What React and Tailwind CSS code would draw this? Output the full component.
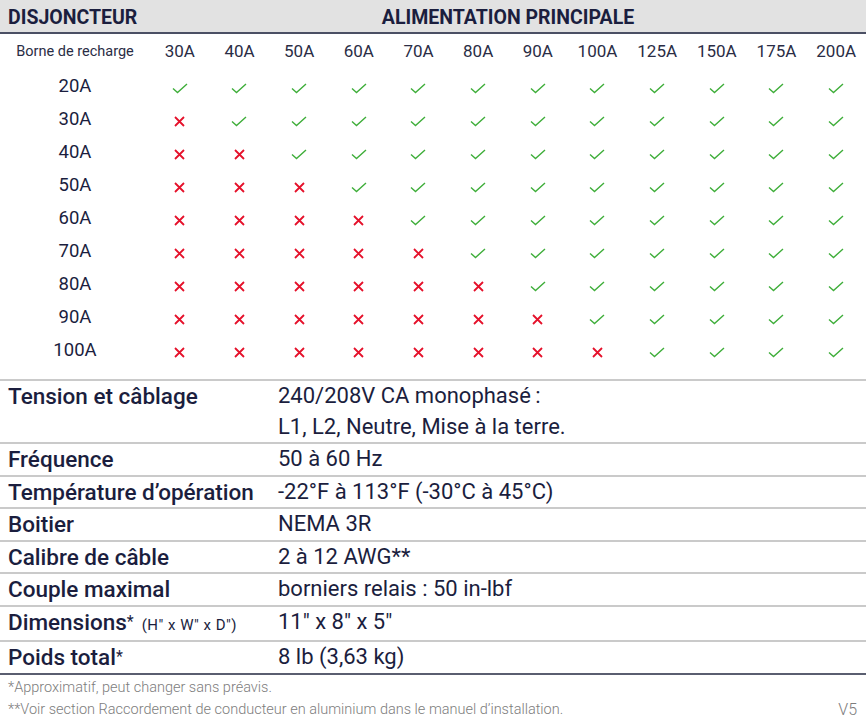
const cols = ["30A", "40A", "50A", "60A", "70A", "80A", "90A", "100A", "125A", "150A", "175A", "200A"];
const colAmps = [30, 40, 50, 60, 70, 80, 90, 100, 125, 150, 175, 200];
const rowAmps = [20, 30, 40, 50, 60, 70, 80, 90, 100];

const Check = () => (
  <svg width="16" height="11" viewBox="0 0 16 11" fill="none">
    <path d="M1 5.5 L5.5 9.5 L15 1" stroke="#3fae3a" strokeWidth="1.4" />
  </svg>
);

const Cross = () => (
  <svg width="11" height="11" viewBox="0 0 11 11" fill="none">
    <path d="M1 1 L10 10 M10 1 L1 10" stroke="#e5112b" strokeWidth="1.8" />
  </svg>
);

const specs = [
  { label: "Tension et câblage", value: ["240/208V CA monophasé\u2009:", "L1, L2, Neutre, Mise à la terre."] },
  { label: "Fréquence", value: ["50 à 60 Hz"] },
  { label: "Température d’opération", value: ["-22°F à 113°F (-30°C à 45°C)"] },
  { label: "Boitier", value: ["NEMA 3R"] },
  { label: "Calibre de câble", value: ["2 à 12 AWG**"] },
  { label: "Couple maximal", value: ["borniers relais : 50 in-lbf"] },
  { label: "Dimensions", star: true, sub: "(H\" x W\" x D\")", value: ["11\" x 8\" x 5\""] },
  { label: "Poids total", star: true, value: ["8 lb (3,63 kg)"] },
];

const App = () => {
  return (
    <div className="w-[866px] h-[726px] bg-white text-[#1b1e3e] font-['Roboto',sans-serif] overflow-hidden">
      {/* header */}
      <div className="grid grid-cols-[150px_1fr] h-[34px] pt-[3px] bg-[#e2e2e2] border-b-2 border-[#4b5064] items-center">
        <div className="pl-2 text-[19.5px] font-bold leading-none">DISJONCTEUR</div>
        <div className="text-center text-[19.5px] font-bold leading-none">ALIMENTATION PRINCIPALE</div>
      </div>

      {/* compatibility grid */}
      <div className="grid grid-cols-[150px_repeat(12,1fr)]">
        <div className="h-[36px] flex items-center justify-center text-[14.5px] text-[#2a2d45]">Borne de recharge</div>
        {cols.map((c) => (
          <div key={c} className="h-[36px] flex items-center justify-center text-[17px] text-[#2a2d45]">{c}</div>
        ))}
        {rowAmps.map((r) => (
          <div key={r} className="contents">
            <div className="h-[33px] flex items-center justify-center text-[18.5px]">{r}A</div>
            {colAmps.map((c) => (
              <div key={c} className="h-[33px] flex items-center justify-center pt-1">
                {c > r ? <Check /> : <Cross />}
              </div>
            ))}
          </div>
        ))}
      </div>

      {/* specs */}
      <div className="mt-[12px] border-t-2 border-[#cacaca]">
        {specs.map((s, i) => (
          <div
            key={s.label}
            className={
              i === specs.length - 1
                ? "grid grid-cols-[278px_1fr] border-b-2 border-[#5a5e70]"
                : "grid grid-cols-[278px_1fr] border-b-2 border-[#cacaca]"
            }
          >
            <div className="pl-2 text-[22.5px] font-medium leading-[30.5px] whitespace-nowrap">
              {s.label}
              {s.star && <span className="text-[16px] font-normal align-top">*</span>}
              {s.sub && <span className="text-[15px] font-normal ml-2 tracking-[0.5px]">{s.sub}</span>}
            </div>
            <div className="text-[22px] leading-[30.5px] whitespace-nowrap">
              {s.value.map((v) => (
                <div key={v}>{v}</div>
              ))}
            </div>
          </div>
        ))}
      </div>

      {/* footnotes */}
      <div className="pl-2 pr-[9px] pt-[2px] text-[14.5px] font-light text-[#7d7d7d] leading-[22px]">
        <div>*Approximatif, peut changer sans préavis.</div>
        <div className="flex justify-between">
          <span>**Voir section Raccordement de conducteur en aluminium dans le manuel d’installation.</span>
          <span className="text-[16px]">V5</span>
        </div>
      </div>
    </div>
  );
};

export default App;
